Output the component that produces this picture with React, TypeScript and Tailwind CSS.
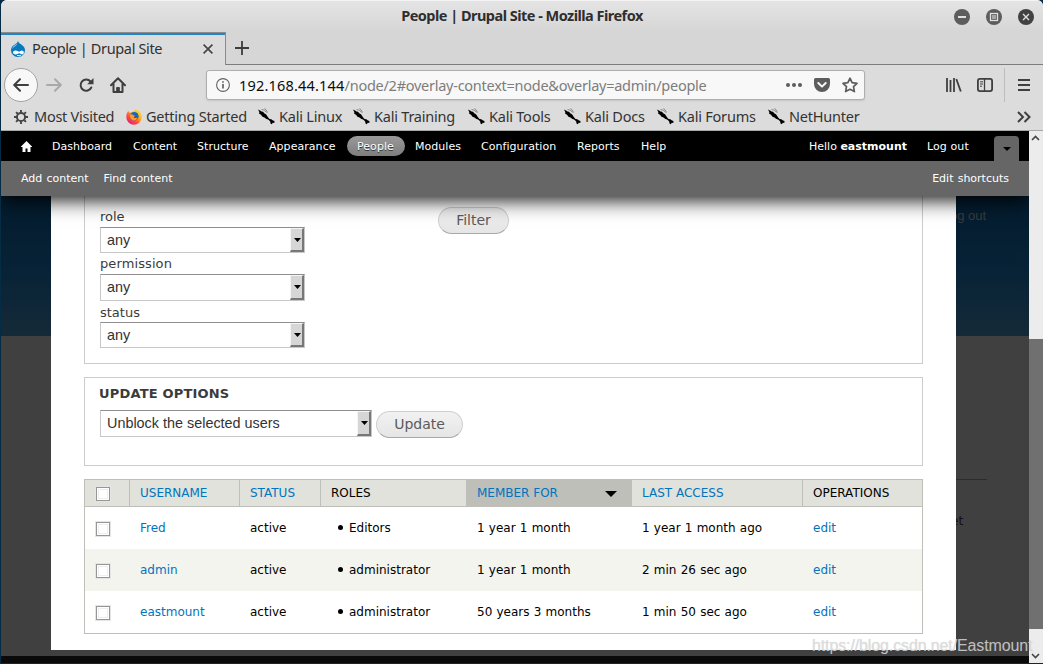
import type { ReactNode } from 'react';
import { clsx } from 'clsx';

const bookmarks = [
  { label: 'Kali Linux', width: 'w-[95px]' },
  { label: 'Kali Training', width: 'w-[115px]' },
  { label: 'Kali Tools', width: 'w-[96px]' },
  { label: 'Kali Docs', width: 'w-[93px]' },
  { label: 'Kali Forums', width: 'w-[111px]' },
  { label: 'NetHunter', width: 'w-[100px]' },
];

const menuItems = [
  { label: 'Dashboard', width: 'w-[81px]' },
  { label: 'Content', width: 'w-[64px]' },
  { label: 'Structure', width: 'w-[72px]' },
  { label: 'Appearance', width: 'w-[88px]' },
  { label: 'People', width: 'w-[58px]', active: true },
  { label: 'Modules', width: 'w-[66px]' },
  { label: 'Configuration', width: 'w-[96px]' },
  { label: 'Reports', width: 'w-[64px]' },
  { label: 'Help', width: 'w-[40px]' },
];

const users = [
  { name: 'Fred', role: 'Editors', member: '1 year 1 month', access: '1 year 1 month ago' },
  { name: 'admin', role: 'administrator', member: '1 year 1 month', access: '2 min 26 sec ago' },
  { name: 'eastmount', role: 'administrator', member: '50 years 3 months', access: '1 min 50 sec ago' },
];

function DrupalIcon() {
  return (
    <svg width="16" height="16" viewBox="0 0 16 16">
      <path d="M8 0C8.600 2 10 2.500 12 4c2 1.500 3 3.200 3 5.300A6.800 6.700 0 0 1 8 16 6.800 6.700 0 0 1 1 9.300C1 7 2 5.300 4 4 6 2.700 7.500 2 8 0Z" fill="#0678be" />
      <path d="M7.500 2C6.800 3 5.200 3.700 4 4.700 2.800 5.700 2.200 7 2.200 8.300c1-2.300 4.800-3.300 5.300-6.300Z" fill="#79bce4" />
      <path d="M5.500 9.500c1.600 0 2.700 1.200 3.600 1.200.9 0 1.500-1.200 2.700-1.200 1.300 0 2 .9 2 2 0 1.200-.7 1.900-1.700 1.900-1.300 0-1.900-1.200-2.900-1.200S7.700 13.400 5.600 13.400C4 13.400 3 12.600 3 11.500s1-2 2.500-2Z" fill="#fff" />
      <path d="M7 14.200c1.200.8 3 .8 4-.1" stroke="#fff" strokeWidth="1" fill="none" />
    </svg>
  );
}

function FirefoxIcon() {
  return (
    <svg width="16" height="16" viewBox="0 0 16 16">
      <defs>
        <linearGradient id="fx" x1="1" y1="0" x2="0.2" y2="1">
          <stop offset="0" stopColor="#fff044" />
          <stop offset="0.4" stopColor="#ffb01e" />
          <stop offset="0.7" stopColor="#ff4a3a" />
          <stop offset="1" stopColor="#e8138c" />
        </linearGradient>
      </defs>
      <path d="M2.200 2 4 4c1-.9 2-1.300 3-1.300L9.500.5C13 1 15.700 4 15.700 8A7.700 7.700 0 0 1 .3 8C.3 5.600 1 3.700 2.200 2Z" fill="url(#fx)" />
      <circle cx="8.300" cy="7.300" r="4.300" fill="#1467c9" />
      <path d="M4 5.500c1.500-.4 2.600.1 3.500.8L9 7 7.500 8.200c1 1.400 3 .8 4.200.3-.8 2.500-3 3.300-5 2.700C4.500 10.500 3.600 8 4 5.500Z" fill="#ff9a22" />
    </svg>
  );
}

function KaliIcon() {
  return (
    <svg width="17" height="17" viewBox="0 0 17 17" className="shrink-0">
      <path d="M0 1.500 2.500 2.700l1 .8 1.500.2 1.500 1.800 1.500.7 2.200 3.300 1.300 1.500 1.800.3 1.700 1.200 1.500.5-.2 2-1.600-.3-.8 1.500-1.400-.6-.3-2.200-1.700-1.700-2.500-.9L6.500 9.500 4.500 8.800 3 6.800 1 5.500l.4-1.300Z" fill="#000" />
      <path d="M3.500 1.500 6.500 2.200 8.500 4.500M6.500.5 8 1.700l1.500 2.800" fill="none" stroke="#555" strokeWidth=".6" />
    </svg>
  );
}

function GearIcon() {
  return (
    <svg width="14" height="14" viewBox="0 0 14 14" fill="none" stroke="#454545">
      <circle cx="7" cy="7" r="4.100" strokeWidth="2" />
      <path d="M7 0v2.500M7 11.500V14M0 7h2.500M11.500 7H14M2.050 2.050l1.800 1.800M10.150 10.150l1.800 1.800M2.050 11.950l1.800-1.800M10.150 3.850l1.800-1.800" strokeWidth="1.900" />
    </svg>
  );
}

function WindowButton({ children, dark }: { children: ReactNode; dark?: boolean }) {
  return (
    <svg width="16" height="16" viewBox="0 0 16 16" fill="none">
      <circle cx="8" cy="8" r="8" fill={dark ? '#424242' : '#5d5d5d'} />
      {children}
    </svg>
  );
}

function TitleBar() {
  return (
    <div className="flex h-8 items-center bg-linear-to-b from-[#e4e4e4] to-[#d6d6d6] pr-[9px] pl-[9px] border-t border-[#f3f3f3]">
      <div className="w-20" />
      <h1 className="-mt-[2px] flex-1 text-center text-[14.500px] font-bold whitespace-nowrap text-[#2e2e2e] -tracking-[0.520px]">
        People | Drupal Site - Mozilla Firefox
      </h1>
      <div className="flex w-20 gap-4">
        <WindowButton>
          <path d="M4 8h8" stroke="#e0e0e0" strokeWidth="2" />
        </WindowButton>
        <WindowButton>
          <rect x="4.500" y="4.500" width="7" height="7" stroke="#e0e0e0" strokeWidth="1.300" />
          <rect x="6" y="6" width="4" height="4" fill="#a5a5a5" />
        </WindowButton>
        <WindowButton dark>
          <path d="m5 5 6 6m0-6-6 6" stroke="#e0e0e0" strokeWidth="1.400" />
        </WindowButton>
      </div>
    </div>
  );
}

function TabBar() {
  return (
    <div className="flex h-[33px] bg-[#d6d6d6]">
      <div className="flex w-[225px] items-center border-t border-r border-[#8b8b8b] bg-[#dcdcdc] shadow-[inset_0_2px_0_#2086c8]">
        <div className="ml-[9px]"><DrupalIcon /></div>
        <span className="-mt-px ml-[6px] flex-1 text-[14.500px] whitespace-nowrap text-[#303030] -tracking-[0.360px]">People | Drupal Site</span>
        <svg width="10" height="10" viewBox="0 0 10 10" className="mr-3" stroke="#454545" strokeWidth="1.700">
          <path d="m.6.6 8.800 8.800m0-8.800L.6 9.400" />
        </svg>
      </div>
      <div className="flex flex-1 items-center border-b border-[#7c7c7c] pl-[9px]">
        <svg width="14" height="14" viewBox="0 0 14 14" stroke="#3c3c3c" strokeWidth="1.800">
          <path d="M7 0v14M0 7h14" />
        </svg>
      </div>
    </div>
  );
}

function NavBar() {
  return (
    <div className="flex h-10 items-center pl-[3px]">
      <div className="flex size-[34px] items-center justify-center rounded-full border border-[#a3a3a3] bg-[#f8f8f8]">
        <svg width="16" height="14" viewBox="0 0 16 14" fill="none" stroke="#3f3f3f" strokeWidth="2" strokeLinecap="round" strokeLinejoin="round">
          <path d="M15 7H1.500M7 1.200 1.200 7 7 12.800" />
        </svg>
      </div>
      <svg width="16" height="14" viewBox="0 0 16 14" className="ml-2" fill="none" stroke="#a9a9a9" strokeWidth="2" strokeLinecap="round" strokeLinejoin="round">
        <path d="M1 7h13.500M9 1.200 14.800 7 9 12.800" />
      </svg>
      <svg width="16" height="16" viewBox="0 0 16 16" className="ml-4" fill="none" stroke="#3f3f3f" strokeWidth="2">
        <path d="M12.500 4.500A5.600 5.600 0 1 0 13.300 10.500" strokeLinecap="round" />
        <path d="M15.500 1v6.300H9.200Z" fill="#3f3f3f" stroke="none" />
      </svg>
      <svg width="16" height="16" viewBox="0 0 16 16" className="ml-4" fill="none" stroke="#3f3f3f" strokeWidth="2">
        <path d="M1 8.300 8 1.300l7 7M3.500 7v8h9V7" strokeLinejoin="round" strokeLinecap="round" />
        <path d="M6.700 15v-4.500h2.600V15" fill="#3f3f3f" strokeWidth="1" />
      </svg>
      <div className="ml-20 flex h-[30px] w-[659px] items-center rounded-[3px] border border-[#aeaeae] bg-[#f8f8f8] pl-[9px] shadow-[0_1px_2px_#0000001a]">
        <svg width="14" height="14" viewBox="0 0 14 14" fill="none" stroke="#636363">
          <circle cx="7" cy="7" r="6.400" strokeWidth="1.100" />
          <path d="M7 6v4.500M7 3.300v1.500" strokeWidth="1.700" />
        </svg>
        <span className="ml-[9px] flex-1 pt-[2px] text-[14.500px] whitespace-nowrap text-[#7d7d7d] -tracking-[0.260px]">
          <span className="tracking-[0.190px] text-[#0c0c0c]">192.168.44.144</span>/node/2#overlay-context=node&amp;overlay=admin/people
        </span>
        <svg width="16" height="4" viewBox="0 0 16 4" fill="#5d5d5d">
          <circle cx="2" cy="2" r="2" /><circle cx="8" cy="2" r="2" /><circle cx="14" cy="2" r="2" />
        </svg>
        <svg width="16" height="14" viewBox="0 0 16 14" className="ml-3" fill="#5d5d5d">
          <path d="M1.500 0h13A1.500 1.500 0 0 1 16 1.500V6A8 8 0 0 1 0 6V1.500A1.500 1.500 0 0 1 1.500 0Z" />
          <path d="m4.300 5 3.700 3.600L11.700 5" fill="none" stroke="#f8f8f8" strokeWidth="2" strokeLinecap="round" strokeLinejoin="round" />
        </svg>
        <svg width="16" height="16" viewBox="0 0 16 16" className="mr-[6px] ml-3" fill="none" stroke="#5d5d5d" strokeWidth="1.700" strokeLinejoin="round">
          <path d="m8 1.200 2.100 4.400 4.900.7-3.500 3.400.9 4.900L8 12.300l-4.400 2.300.9-4.900L1 6.300l4.900-.7Z" />
        </svg>
      </div>
      <svg width="16" height="14" viewBox="0 0 16 14" className="ml-[81px]" stroke="#3f3f3f" strokeWidth="1.800">
        <path d="M1 0v14M4.500 2v12M8 0v14M10.300 1l4.500 12.500" />
      </svg>
      <svg width="16" height="14" viewBox="0 0 16 14" className="ml-[15px]" fill="none" stroke="#3f3f3f">
        <rect x=".9" y=".9" width="14.200" height="12.200" rx="2" strokeWidth="1.800" />
        <path d="M7.500 1v12" strokeWidth="1.300" />
        <path d="M3 3.800h3M3 6h3M3 8.200h2" strokeWidth="1" />
      </svg>
      <div className="ml-[11px] h-[34px] w-px bg-[#bdbdbd]" />
      <svg width="12" height="12" viewBox="0 0 12 12" className="ml-[13px]" stroke="#3f3f3f" strokeWidth="2">
        <path d="M0 1h12M0 6h12M0 11h12" />
      </svg>
    </div>
  );
}

function BookmarksBar() {
  return (
    <div className="flex h-[26px] items-center border-b border-[#a6aaa7] pb-[2px] pl-[13px] text-[14.500px] whitespace-nowrap text-[#333] -tracking-[0.220px]">
      <div className="flex w-[112px] items-center gap-[6px]">
        <GearIcon />
        <span className="-tracking-[0.260px]">Most Visited</span>
      </div>
      <div className="flex w-[132px] items-center gap-1">
        <FirefoxIcon />
        <span>Getting Started</span>
      </div>
      {bookmarks.map(b => (
        <div key={b.label} className={clsx('flex items-center gap-1', b.width)}>
          <KaliIcon />
          <span>{b.label}</span>
        </div>
      ))}
      <svg width="14" height="12" viewBox="0 0 14 12" className="mr-3 ml-auto" fill="none" stroke="#3f3f3f" strokeWidth="2">
        <path d="m1 1 5 5-5 5M7.500 1l5 5-5 5" />
      </svg>
    </div>
  );
}

function AdminToolbar() {
  return (
    <div className="relative z-10 text-[11px] text-white shadow-[0_3px_20px_#000] [clip-path:inset(0_0_-40px_0)]">
      <div className="flex h-[30px] items-center bg-black pl-[20px] whitespace-nowrap">
        <svg width="11" height="11" viewBox="0 0 11 11" fill="#fff">
          <path d="M5.500 0 11 5.500V6H9.500v5h-3V7.500h-2V11h-3V6H0v-.5Z" />
        </svg>
        <nav className="ml-[10px] flex flex-1">
          {menuItems.map(item => (
            <a
              key={item.label}
              className={clsx('h-5 rounded-full pt-px pl-[10px] leading-5 tracking-[0.050px]', item.width, item.active && 'bg-linear-to-b from-[#9a9a9a] to-[#7d7d7d] [text-shadow:0_1px_0_#333]')}
            >
              {item.label}
            </a>
          ))}
        </nav>
        <span className="w-[118px] pt-[2px]">Hello <b>eastmount</b></span>
        <span className="w-[67px] pt-[2px] tracking-[0.100px]">Log out</span>
        <div className="mr-[10px] flex h-[25px] w-[25px] items-center justify-center self-end rounded-t-[4px] bg-[#666]">
          <svg width="8" height="4" viewBox="0 0 8 4"><path d="M0 0h8L4 4Z" /></svg>
        </div>
      </div>
      <div className="flex h-[35px] items-center gap-[15px] bg-[#666] pt-[2px] pr-5 pl-5 [word-spacing:0.700px]">
        <span>Add content</span>
        <span className="flex-1">Find content</span>
        <span>Edit shortcuts</span>
      </div>
    </div>
  );
}

function Select({ value, className }: { value: string; className: string }) {
  return (
    <div className={clsx('flex border border-[#c7c7c7] border-t-[#8e8e8e] bg-white font-["Liberation_Sans",sans-serif] text-[14.400px] text-[#333]', className)}>
      <span className="flex flex-1 items-center pt-px pl-[6px] whitespace-nowrap">{value}</span>
      <span className="flex w-[14px] items-center justify-center border-t border-r-2 border-b-2 border-l border-t-[#f5f5f5] border-r-[#777] border-b-[#777] border-l-[#f5f5f5] bg-[#d6d6d6] pl-px">
        <svg width="7" height="4" viewBox="0 0 7 4"><path d="M0 0h7L3.500 4Z" /></svg>
      </span>
    </div>
  );
}

function PillButton({ children, className }: { children: string; className: string }) {
  return (
    <button className={clsx('h-[27px] rounded-full border border-[#cfcfcf] border-b-[#a8a8a8] bg-linear-to-b from-[#f2f2f2] to-[#e5e5e5] pb-[2px] text-[14px] leading-[22px] text-[#5a5a5a]', className)}>
      {children}
    </button>
  );
}

function Checkbox() {
  return <span className="relative top-px left-[0.500px] block size-[14px] border border-[#969696] bg-white shadow-[inset_0_0_0_1px_#fff,inset_0_0_0_2px_#eee,0_0_0_1px_#e5e5e5]" />;
}

function UsersTable() {
  return (
    <table className="mt-[13px] w-[839px] table-fixed border-collapse text-left text-[12px] text-black">
      <colgroup>
        <col className="w-[45px]" />
        <col className="w-[110px]" />
        <col className="w-[81px]" />
        <col className="w-[146px]" />
        <col className="w-[165px]" />
        <col className="w-[171px]" />
        <col className="w-[120px]" />
      </colgroup>
      <thead>
        <tr className="h-[27px] bg-[#e1e2dc] *:border *:border-[#bebfb9] *:p-0 *:pl-[10px] *:font-normal">
          <th><Checkbox /></th>
          <th className="text-[#0074bd]">USERNAME</th>
          <th className="text-[#0074bd]">STATUS</th>
          <th>ROLES</th>
          <th className="bg-[#bebfb9] text-[#0074bd]">
            <div className="flex items-center justify-between pr-[14px]">
              MEMBER FOR
              <svg width="12" height="6" viewBox="0 0 12 6" className="mt-[2px]" fill="#000"><path d="M0 0h12L6 6Z" /></svg>
            </div>
          </th>
          <th className="text-[#0074bd]">LAST ACCESS</th>
          <th>OPERATIONS</th>
        </tr>
      </thead>
      <tbody className="border border-[#bebfb9] [word-spacing:0.400px]">
        {users.map(user => (
          <tr key={user.name} className="h-[42px] last:h-[43px] even:bg-[#f3f4ee] *:p-0 *:pl-[10.500px]">
            <td><Checkbox /></td>
            <td className="text-[#0074bd]">{user.name}</td>
            <td>active</td>
            <td>
              <div className="flex items-center gap-[6px] pl-[7px]">
                <span className="size-[5px] rounded-full bg-black" />
                {user.role}
              </div>
            </td>
            <td>{user.member}</td>
            <td>{user.access}</td>
            <td className="text-[#0074bd]">edit</td>
          </tr>
        ))}
      </tbody>
    </table>
  );
}

function PeopleOverlay() {
  return (
    <main className="h-[454px] w-[905px] bg-white pl-[33px] text-[#3b3b3b]">
      <section className="flex h-[168px] w-[839px] border border-t-0 border-[#ccc] pl-[15px] text-[13px]">
        <div className="w-[338px] pt-[11px]">
          <div className="h-5 leading-[19px]">role</div>
          <Select value="any" className="h-[26px] w-[205px]" />
          <div className="h-[21px] leading-[21px] tracking-[0.100px]">permission</div>
          <Select value="any" className="h-[27px] w-[205px]" />
          <div className="h-[21px] leading-[23px]">status</div>
          <Select value="any" className="h-[26px] w-[205px]" />
        </div>
        <PillButton className="mt-[11px] w-[71px]">Filter</PillButton>
      </section>
      <section className="mt-[13px] h-[89px] w-[839px] border border-[#ccc] pl-[15px]">
        <h2 className="-ml-px h-8 pt-[6px] text-[13px] leading-5 font-bold tracking-[0.180px]">UPDATE OPTIONS</h2>
        <div className="flex gap-1">
          <Select value="Unblock the selected users" className="h-[27px] w-[272px]" />
          <PillButton className="mt-px w-[87px]">Update</PillButton>
        </div>
      </section>
      <UsersTable />
    </main>
  );
}

function Scrollbar() {
  return (
    <div className="flex w-[14px] flex-col justify-between bg-[#ececec]">
      <svg width="14" height="14" viewBox="0 0 14 14" fill="none" stroke="#444" strokeWidth="1.600"><path d="m3 9 3.500-3.500L10 9" /></svg>
      <div className="mt-[194px] h-[290px] bg-[#707070]" />
      <svg width="14" height="14" viewBox="0 0 14 14" className="mt-auto" fill="none" stroke="#444" strokeWidth="1.600"><path d="m3 5 3.500 3.500L10 5" /></svg>
    </div>
  );
}

function App() {
  return (
    <div className="relative h-[664px] w-[1043px] overflow-hidden bg-[#062b45] pb-px pl-px font-['Noto_Sans',sans-serif]">
      <div className="flex h-full flex-col overflow-hidden rounded-t-[6px] bg-[#dcdcdc]">
        <TitleBar />
        <TabBar />
        <NavBar />
        <BookmarksBar />
        <div className="flex flex-1 overflow-hidden font-['DejaVu_Sans',sans-serif]">
          <div className="w-[1028px]">
            <AdminToolbar />
            <div className="flex h-[460px] bg-[linear-gradient(#031b2d_0,#072236_70px,#142a38_140px,#404040_140px)]">
              <div className="w-[50px]" />
              <PeopleOverlay />
              <aside className="w-[73px] overflow-hidden text-[#3c3c3c]">
                <div className="-ml-[6px] h-[283px] pt-[10px] text-[13px] whitespace-nowrap font-['Liberation_Sans',sans-serif]">og out</div>
                <div className="h-px w-[31px] bg-[#2c2c2c]" />
                <div className="-ml-[5px] pt-[32px] text-[12px] text-[#111]">et</div>
              </aside>
            </div>
            <div className="h-[7px] bg-[#0a0a0a]" />
          </div>
          <Scrollbar />
        </div>
      </div>
      <span className="absolute top-[634px] left-[812px] z-20 font-['Liberation_Sans',sans-serif] text-[16px] whitespace-nowrap text-[#dcdcdc]/80 -tracking-[0.120px] [text-shadow:0_0_1px_#8885]">
        https://blog.csdn.net/Eastmount
      </span>
    </div>
  );
}

export default App;
